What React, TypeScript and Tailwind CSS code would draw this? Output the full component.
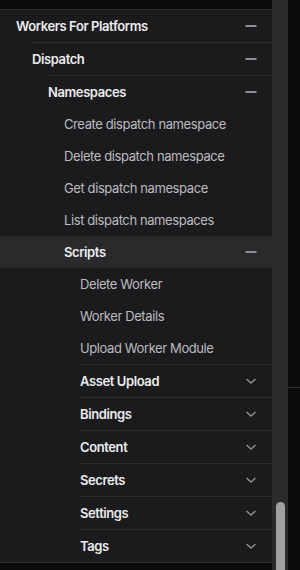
import React from "react";

const Minus = () => (
  <svg width="12" height="12" viewBox="0 0 12 12" className="shrink-0">
    <rect x="0.5" y="5" width="11" height="2" fill="#8f8f93" />
  </svg>
);

const Chevron = () => (
  <svg width="12" height="12" viewBox="0 0 12 12" className="shrink-0">
    <polyline points="1.5,4 6,8 10.5,4" fill="none" stroke="#8f8f93" strokeWidth="1.5" />
  </svg>
);

type Item = { label: string; indent: string; bold?: boolean; open?: boolean; closed?: boolean; line?: boolean; active?: boolean };

const items: Item[] = [
  { label: "Workers For Platforms", indent: "pl-4", bold: true, open: true, line: true },
  { label: "Dispatch", indent: "ml-8", bold: true, open: true, line: true },
  { label: "Namespaces", indent: "ml-12", bold: true, open: true, line: true },
  { label: "Create dispatch namespace", indent: "pl-16" },
  { label: "Delete dispatch namespace", indent: "pl-16" },
  { label: "Get dispatch namespace", indent: "pl-16" },
  { label: "List dispatch namespaces", indent: "pl-16" },
  { label: "Scripts", indent: "pl-16", bold: true, open: true, active: true },
  { label: "Delete Worker", indent: "pl-20" },
  { label: "Worker Details", indent: "pl-20" },
  { label: "Upload Worker Module", indent: "pl-20" },
  { label: "Asset Upload", indent: "ml-20", bold: true, closed: true, line: true },
  { label: "Bindings", indent: "ml-20", bold: true, closed: true, line: true },
  { label: "Content", indent: "ml-20", bold: true, closed: true, line: true },
  { label: "Secrets", indent: "ml-20", bold: true, closed: true, line: true },
  { label: "Settings", indent: "ml-20", bold: true, closed: true, line: true },
  { label: "Tags", indent: "ml-20", bold: true, closed: true, line: true },
];

const Row = ({ it }: { it: Item }) => (
  <div
    className={
      "flex items-center justify-between h-8 pr-[15px] box-content " +
      it.indent +
      (it.line ? " border-t border-[#2d2d30]" : "") +
      (it.active ? " bg-[#2a2a2d]" : "")
    }
  >
    <span
      className={
        "pt-[2px] tracking-[-0.4px] text-[13px] " +
        (it.bold ? "font-semibold text-[#ececef]" : "text-[#bcbcc0]")
      }
    >
      {it.label}
    </span>
    {it.open && <Minus />}
    {it.closed && <Chevron />}
  </div>
);

export default function App() {
  return (
    <div className="flex h-[570px] w-[300px] overflow-hidden bg-[#0b0b0d] font-['Inter',sans-serif]">
      <div className="w-[272px] shrink-0 flex flex-col">
        <div className="h-[9px] bg-[#0b0b0d]" />
        <div className="bg-[#1b1b1d] border-b border-[#2d2d30]">
          {items.map((it) => (
            <Row key={it.label} it={it} />
          ))}
        </div>
      </div>
      {/* scrollbar */}
      <div className="w-4 shrink-0 bg-[#2b2b2b] flex justify-center">
        <div className="mt-[502px] w-[9px] h-[90px] rounded-full bg-[#a1a1a1]" />
      </div>
      <div className="w-3 shrink-0 flex flex-col">
        <div className="h-[387px]" />
        <div className="h-px bg-[#2a2a2c]" />
      </div>
    </div>
  );
}
